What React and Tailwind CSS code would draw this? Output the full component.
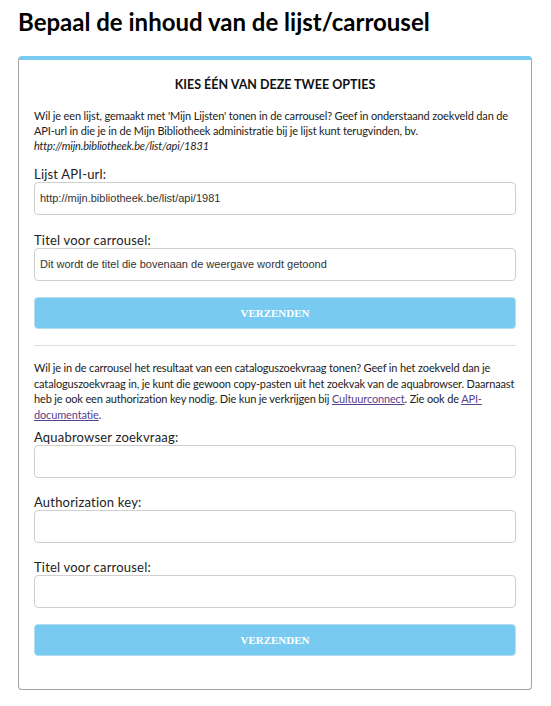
import React from "react";

const body = { fontFamily: "Lato, 'Noto Sans', sans-serif" };
const arial = { fontFamily: "'Liberation Sans', Arial, sans-serif" };
const serif = { fontFamily: "'Liberation Serif', 'Times New Roman', serif" };

function Label({ children, className = "" }) {
  return (
    <div className={`text-[13px] leading-[16px] text-[#222] tracking-[0.2px] ${className}`} style={body}>
      {children}
    </div>
  );
}

function Input({ value = "" }) {
  return (
    <div
      className="h-[33px] w-full rounded-[4px] border border-[#cfcfcf] bg-white px-[5px] flex items-center text-[11px] text-[#333]"
      style={arial}
    >
      {value}
    </div>
  );
}

function Button({ className = "" }) {
  return (
    <div
      className={`h-[32px] w-full rounded-[4px] border border-[#b5ddf2] bg-[#79caf0] flex items-center justify-center text-white text-[11px] font-bold ${className}`}
      style={serif}
    >
      VERZENDEN
    </div>
  );
}

export default function App() {
  return (
    <div className="w-[551px] h-[706px] bg-white" style={body}>
      <h1 className="pl-[18px] pt-[8px] h-[56px] text-[24px] leading-[28px] font-bold text-black" style={body}>
        Bepaal de inhoud van de lijst/carrousel
      </h1>
      <div className="ml-[18px] w-[514px] rounded-[4px] border-t-4 border-t-[#79caf0] border-x border-b border-x-[#a3a3a3] border-b-[#a3a3a3] px-[15px] pt-[16px] pb-[33px]">
        <div className="h-[18px] text-center text-[12.5px] leading-[18px] font-bold text-[#111]" style={body}>
          KIES ÉÉN VAN DEZE TWEE OPTIES
        </div>
        <p className="mt-[14px] text-[11px] leading-[15px] text-[#222] tracking-[-0.15px] whitespace-nowrap" style={body}>
          Wil je een lijst, gemaakt met 'Mijn Lijsten' tonen in de carrousel? Geef in onderstaand zoekveld dan de
          <br />
          API-url in die je in de Mijn Bibliotheek administratie bij je lijst kunt terugvinden, bv.
          <br />
          <i>http://mijn.bibliotheek.be/list/api/1831</i>
        </p>

        <Label className="mt-[13px]">Lijst API-url:</Label>
        <Input value="http://mijn.bibliotheek.be/list/api/1981" />

        <Label className="mt-[17px]">Titel voor carrousel:</Label>
        <Input value="Dit wordt de titel die bovenaan de weergave wordt getoond" />

        <Button className="mt-[16px]" />

        <div className="mt-[16px] h-px bg-[#dedede]" />

        <p className="mt-[14px] text-[11px] leading-[15.5px] text-[#222] tracking-[-0.15px] whitespace-nowrap" style={body}>
          Wil je in de carrousel het resultaat van een cataloguszoekvraag tonen? Geef in het zoekveld dan je
          <br />
          cataloguszoekvraag in, je kunt die gewoon copy-pasten uit het zoekvak van de aquabrowser. Daarnaast
          <br />
          heb je ook een authorization key nodig. Die kun je verkrijgen bij{" "}
          <a className="text-[#5a3f8c] underline">Cultuurconnect</a>. Zie ook de{" "}
          <a className="text-[#5a3f8c] underline">
            API-
            <br />
            documentatie
          </a>
          .
        </p>

        <Label className="mt-[7px]">Aquabrowser zoekvraag:</Label>
        <Input />

        <Label className="mt-[16px]">Authorization key:</Label>
        <Input />

        <Label className="mt-[16px]">Titel voor carrousel:</Label>
        <Input />

        <Button className="mt-[16px]" />
      </div>
    </div>
  );
}
